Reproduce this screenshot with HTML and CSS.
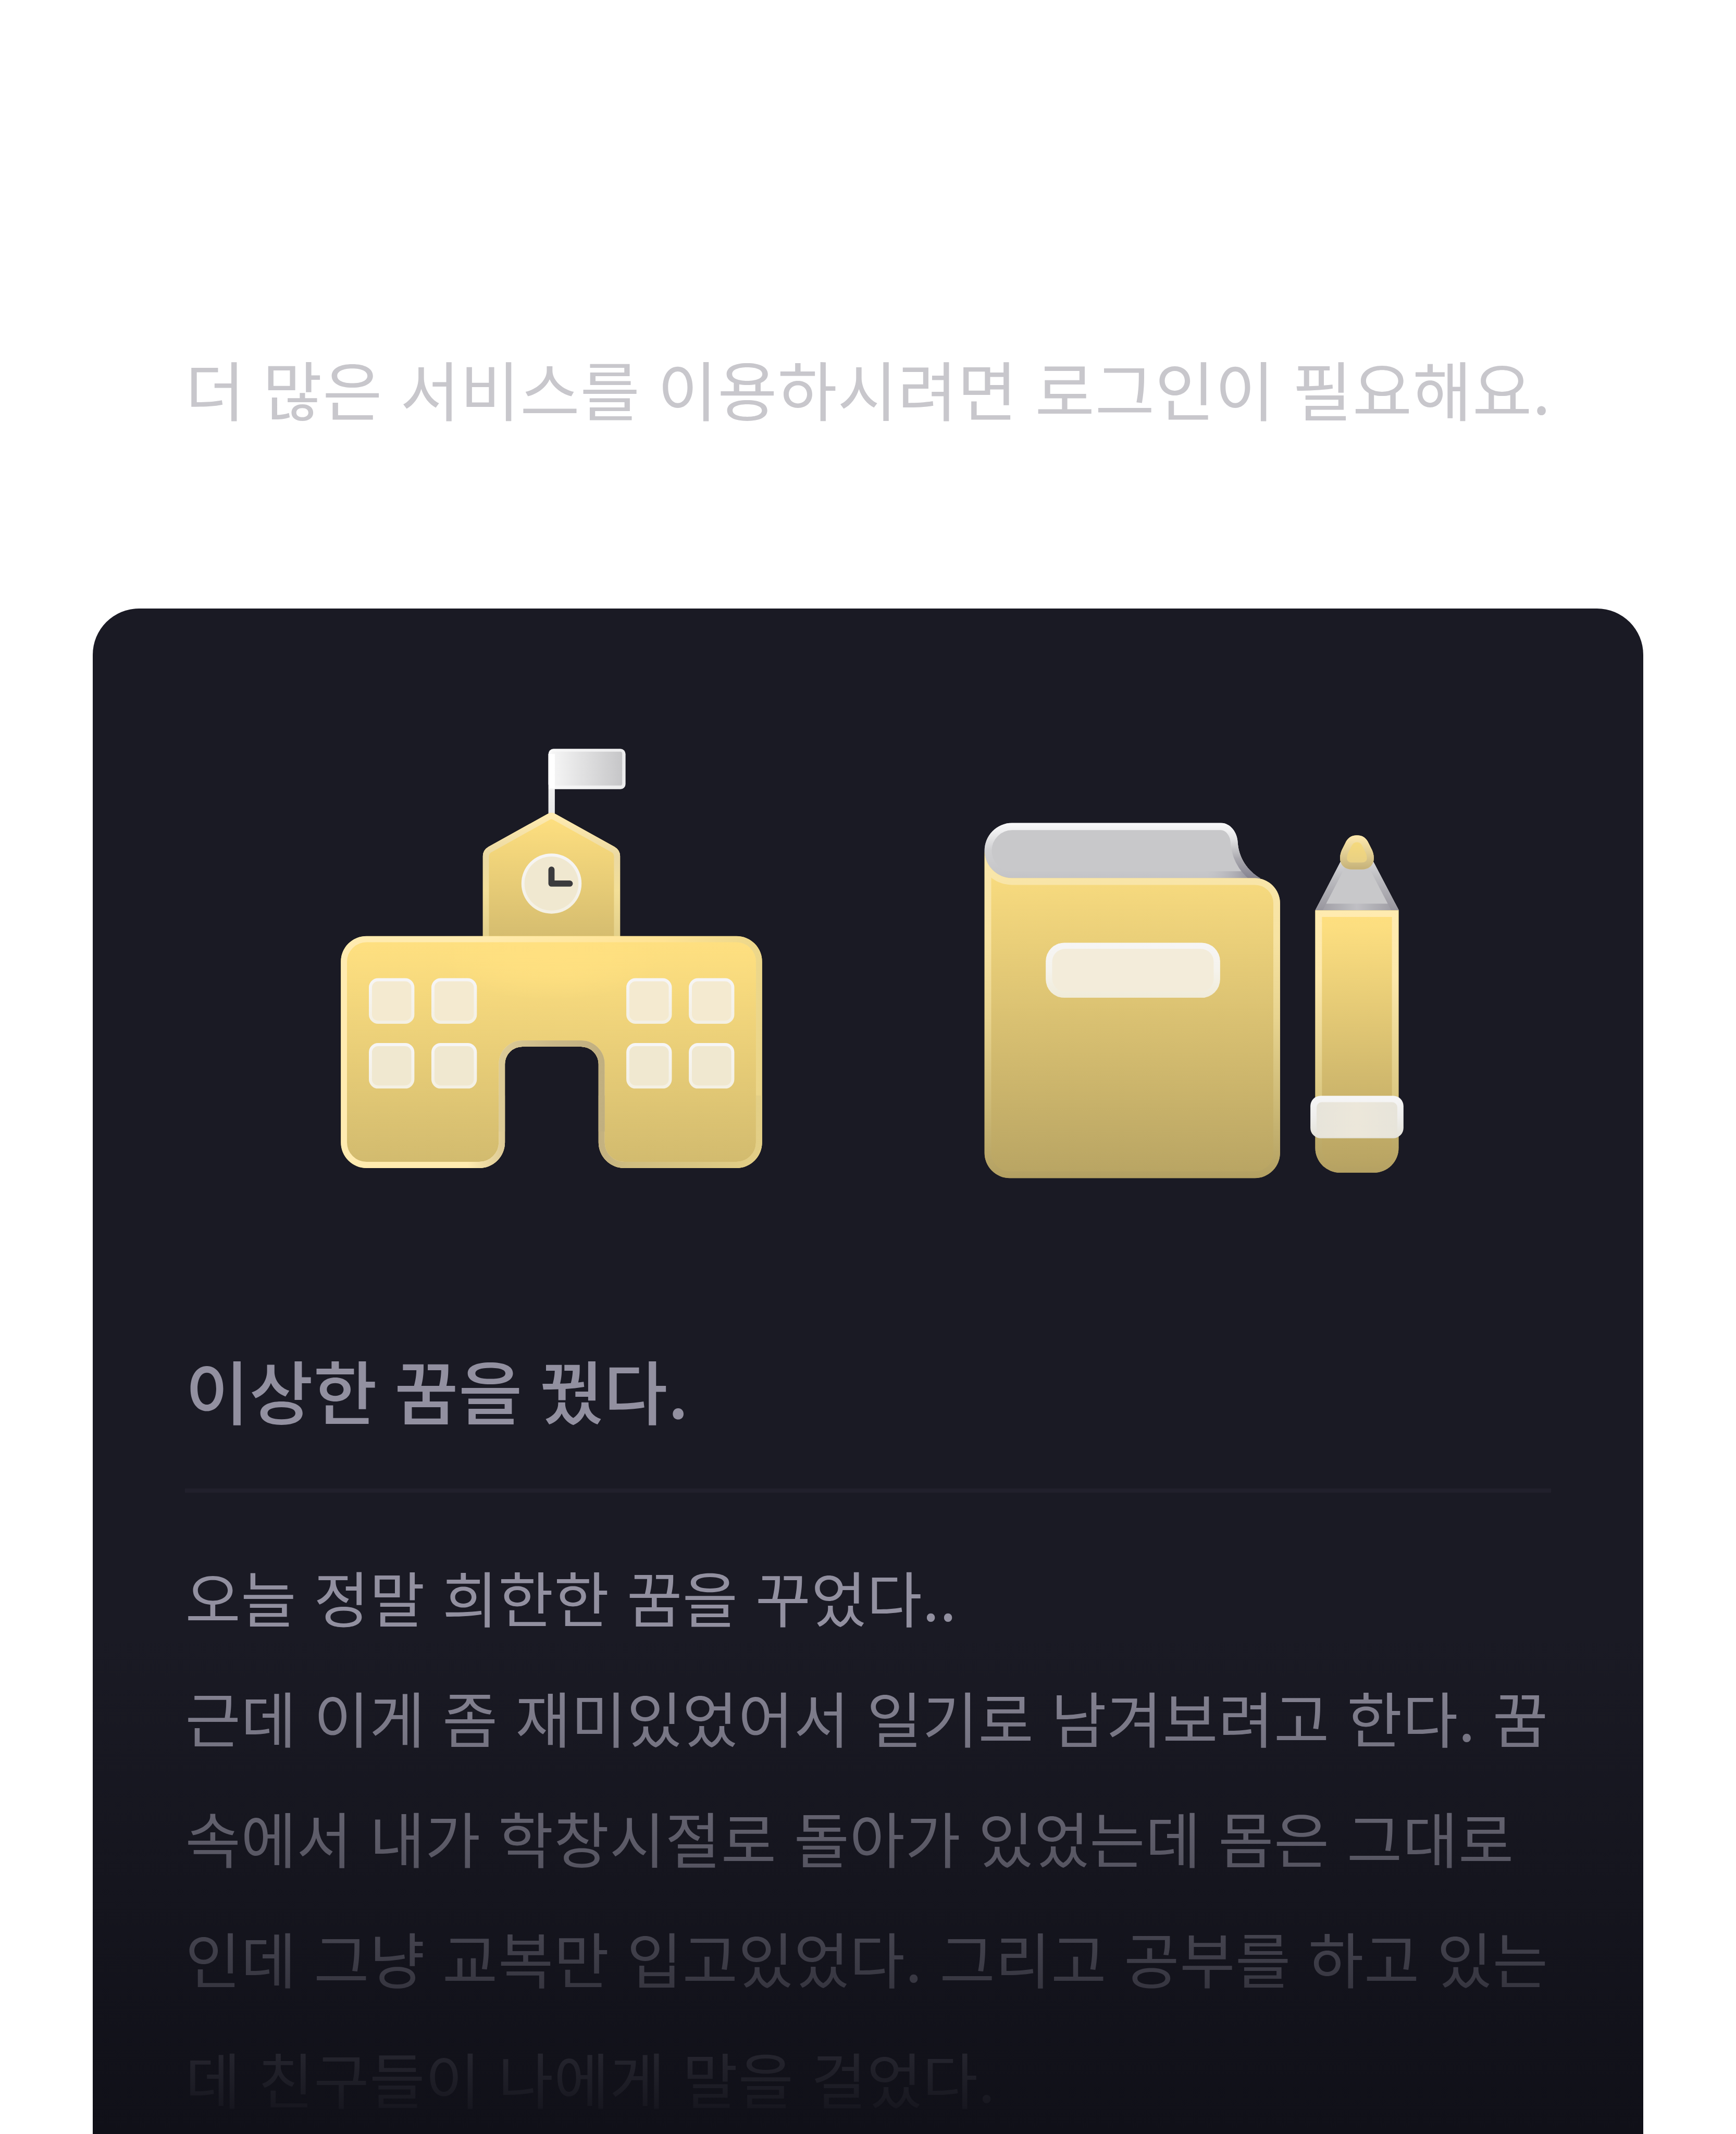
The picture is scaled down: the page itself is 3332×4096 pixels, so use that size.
FILE: index.html
```html
<!DOCTYPE html>
<html lang="ko">
<head>
<meta charset="utf-8">
<title>꿈 일기</title>
<link rel="stylesheet" href="styles.css">
</head>
<body>
<main class="screen">
  <p class="notice">더 많은 서비스를 이용하시려면 로그인이 필요해요.</p>
  <article class="card">
    <div class="icons">
      <svg class="icon" viewBox="600 1400 950 950" aria-hidden="true">
        <defs>
          <linearGradient id="flag" x1="0" x2="1" y1="0" y2="0"><stop offset="0" stop-color="#f6f6f6"/><stop offset="1" stop-color="#c6c6c8"/></linearGradient>
          <linearGradient id="flagEdge" x1="0" x2="1" y1="0" y2="0"><stop offset="0" stop-color="#f8f8f8"/><stop offset="1" stop-color="#ececed"/></linearGradient>
          <linearGradient id="pole" x1="0" x2="0" y1="0" y2="1"><stop offset="0" stop-color="#fff"/><stop offset=".53" stop-color="#fff"/><stop offset=".55" stop-color="#f0f0f0"/><stop offset="1" stop-color="#e6e6e6"/></linearGradient>
          <linearGradient id="tower" x1="0" x2="0" y1="0" y2="1"><stop offset="0" stop-color="#ffe080"/><stop offset="1" stop-color="#d2ba6e"/></linearGradient>
          <linearGradient id="towerEdge" x1="0" x2="0" y1="0" y2="1"><stop offset="0" stop-color="#ffebb0"/><stop offset=".33" stop-color="#ebd9a2"/><stop offset=".58" stop-color="#f3df98"/><stop offset="1" stop-color="#dfcc86"/></linearGradient>
          <linearGradient id="school" x1="0" x2="0" y1="0" y2="1"><stop offset="0" stop-color="#ffe080"/><stop offset=".12" stop-color="#fbdd7f"/><stop offset="1" stop-color="#d1ba6e"/></linearGradient>
          <radialGradient id="schoolGlow" gradientUnits="userSpaceOnUse" cx="0" cy="0" r="1" gradientTransform="translate(1072 1850) scale(230 95)"><stop offset="0" stop-color="#ffe080"/><stop offset=".4" stop-color="#ffe080" stop-opacity=".8"/><stop offset="1" stop-color="#ffe080" stop-opacity="0"/></radialGradient>
          <linearGradient id="schoolEdge" gradientUnits="userSpaceOnUse" x1="663" y1="2000" x2="1482" y2="2040"><stop offset="0" stop-color="#ffebb0"/><stop offset=".3" stop-color="#ffebae"/><stop offset=".75" stop-color="#ffe394"/><stop offset=".96" stop-color="#eed88b"/><stop offset="1" stop-color="#ead589"/></linearGradient>
          <linearGradient id="schoolBase" gradientUnits="userSpaceOnUse" x1="663" y1="0" x2="1482" y2="0"><stop offset=".3" stop-color="#ffebb0"/><stop offset=".39" stop-color="#dbc995"/><stop offset=".6" stop-color="#c0ae80"/><stop offset=".68" stop-color="#cfbd80"/><stop offset="1" stop-color="#e3cf86"/></linearGradient>
          <linearGradient id="door" gradientUnits="userSpaceOnUse" x1="975" y1="0" x2="1175" y2="0"><stop offset="0" stop-color="#dccb97"/><stop offset=".5" stop-color="#cab888"/><stop offset="1" stop-color="#c0af80"/></linearGradient>
          <linearGradient id="pane" x1="0" x2="0" y1="0" y2="1"><stop offset="0" stop-color="#f6f5f5"/><stop offset="1" stop-color="#f4f0e3"/></linearGradient>
          <path id="schoolShape" d="M713 1820H1432A50 50 0 0 1 1482 1870V2221A50 50 0 0 1 1432 2271H1214A50 50 0 0 1 1164 2221V2069A34 34 0 0 0 1130 2035H1016A34 34 0 0 0 982 2069V2221A50 50 0 0 1 932 2271H713A50 50 0 0 1 663 2221V1870A50 50 0 0 1 713 1820Z"/>
          <path id="towerShape" d="M939 1840V1665Q939 1653 950 1646.500L1064 1583Q1072.500 1578 1081 1583L1195 1646.500Q1206 1653 1206 1665V1840Z"/>
          <clipPath id="schoolClip"><use href="#schoolShape"/></clipPath>
          <clipPath id="towerClip"><use href="#towerShape"/></clipPath>
        </defs>
        <rect x="1066.500" y="1456" width="150" height="78.500" rx="10" fill="url(#flagEdge)"/>
        <rect x="1072" y="1461.500" width="138" height="66" rx="4" fill="url(#flag)"/>
        <rect x="1066.500" y="1466" width="12.500" height="125" fill="url(#pole)"/>
        <use href="#towerShape" fill="url(#tower)"/>
        <use href="#towerShape" clip-path="url(#towerClip)" fill="none" stroke="url(#towerEdge)" stroke-width="24"/>
        <circle cx="1072.500" cy="1718" r="58.500" fill="url(#pane)"/>
        <circle cx="1072.500" cy="1718" r="52.500" fill="#f0e8d0"/>
        <path d="M1072.500 1691V1718H1108" fill="none" stroke="#3b3b3d" stroke-width="12" stroke-linecap="round" stroke-linejoin="round"/>
        <use href="#schoolShape" fill="url(#school)"/>
        <use href="#schoolShape" fill="url(#schoolGlow)"/>
        <g clip-path="url(#schoolClip)" fill="none" stroke-width="24">
          <use href="#schoolShape" stroke="url(#schoolEdge)"/>
          <path d="M1482 2130V2221A50 50 0 0 1 1432 2271H1214A50 50 0 0 1 1164 2221V2130M982 2130V2221A50 50 0 0 1 932 2271H760" stroke="url(#schoolBase)"/>
          <path d="M1164 2200V2069A34 34 0 0 0 1130 2035H1016A34 34 0 0 0 982 2069V2200" stroke="url(#door)"/>
        </g>
        <g fill="#f4ead0" stroke="url(#pane)" stroke-width="6">
          <rect x="720.500" y="1905" width="82.500" height="82.500" rx="15"/><rect x="842" y="1905" width="82.500" height="82.500" rx="15"/>
          <rect x="1221" y="1905" width="82.500" height="82.500" rx="15"/><rect x="1342.500" y="1905" width="82.500" height="82.500" rx="15"/>
        </g>
        <g fill="#f0e8d0" stroke="url(#pane)" stroke-width="6">
          <rect x="720.500" y="2031" width="82.500" height="82.500" rx="15"/><rect x="842" y="2031" width="82.500" height="82.500" rx="15"/>
          <rect x="1221" y="2031" width="82.500" height="82.500" rx="15"/><rect x="1342.500" y="2031" width="82.500" height="82.500" rx="15"/>
        </g>
      </svg>
      <svg class="icon" viewBox="1850 1400 950 950" aria-hidden="true">
        <defs>
          <linearGradient id="cover" gradientUnits="userSpaceOnUse" x1="0" y1="1700" x2="0" y2="2290"><stop offset="0" stop-color="#f8db7f"/><stop offset="1" stop-color="#b8a463"/></linearGradient>
          <linearGradient id="coverEdge" gradientUnits="userSpaceOnUse" x1="0" y1="1665" x2="0" y2="2290"><stop offset="0" stop-color="#f9e6ab"/><stop offset=".25" stop-color="#f7e3a2"/><stop offset=".5" stop-color="#e8d48f"/><stop offset=".8" stop-color="#cab774"/><stop offset="1" stop-color="#b3a062"/></linearGradient>
          <linearGradient id="pageEdge" gradientUnits="userSpaceOnUse" x1="0" y1="1600" x2="0" y2="1707"><stop offset="0" stop-color="#f9f9fa"/><stop offset=".15" stop-color="#f0f0f1"/><stop offset=".5" stop-color="#cfcfd1"/><stop offset="1" stop-color="#c4c4c7"/></linearGradient>
          <linearGradient id="pageFoot" gradientUnits="userSpaceOnUse" x1="2340" y1="0" x2="2440" y2="0"><stop offset="0" stop-color="#c4c4c7" stop-opacity="0"/><stop offset="1" stop-color="#898792"/></linearGradient>
          <linearGradient id="pageCurl" gradientUnits="userSpaceOnUse" x1="0" y1="1630" x2="0" y2="1707"><stop offset="0" stop-color="#d0d0d2" stop-opacity="0"/><stop offset=".5" stop-color="#aaa9af"/><stop offset="1" stop-color="#858390"/></linearGradient>
          <linearGradient id="labelEdge" x1="0" x2="0" y1="0" y2="1"><stop offset="0" stop-color="#f6f5f5"/><stop offset=".5" stop-color="#f5f3ec"/><stop offset="1" stop-color="#f0ebd8"/></linearGradient>
          <linearGradient id="body" x1="0" x2="0" y1="0" y2="1"><stop offset="0" stop-color="#ffe080"/><stop offset=".08" stop-color="#fbdd7f"/><stop offset="1" stop-color="#b6a262"/></linearGradient>
          <linearGradient id="bodyEdge" x1="0" x2="0" y1="0" y2="1"><stop offset="0" stop-color="#ffebb0"/><stop offset=".25" stop-color="#fce8ab"/><stop offset=".7" stop-color="#dcc983"/><stop offset=".85" stop-color="#c1ae6b"/><stop offset="1" stop-color="#b5a162"/></linearGradient>
          <linearGradient id="cone" gradientUnits="userSpaceOnUse" x1="0" y1="1672" x2="0" y2="1770"><stop offset="0" stop-color="#d8d8da"/><stop offset=".35" stop-color="#bdbdc1"/><stop offset="1" stop-color="#98969e"/></linearGradient>
          <linearGradient id="coneFoot" gradientUnits="userSpaceOnUse" x1="2557" y1="0" x2="2720" y2="0"><stop offset="0" stop-color="#9a98a0"/><stop offset=".5" stop-color="#c0c0c4"/><stop offset="1" stop-color="#9a98a0"/></linearGradient>
          <linearGradient id="tip" x1="0" x2="0" y1="0" y2="1"><stop offset=".2" stop-color="#f5d97d"/><stop offset=".8" stop-color="#e8d084"/></linearGradient>
          <linearGradient id="tipEdge" x1="0" x2="0" y1="0" y2="1"><stop offset="0" stop-color="#ffe9ae"/><stop offset=".5" stop-color="#e2cf95"/><stop offset="1" stop-color="#c5b178"/></linearGradient>
          <linearGradient id="bandEdge" x1="0" x2="0" y1="0" y2="1"><stop offset="0" stop-color="#f6f6f6"/><stop offset=".5" stop-color="#efeeec"/><stop offset="1" stop-color="#e4e2d8"/></linearGradient>
          <linearGradient id="band" x1="0" x2="1" y1="0" y2="0"><stop offset="0" stop-color="#e7e4da"/><stop offset=".5" stop-color="#ece7da"/><stop offset="1" stop-color="#e7e4da"/></linearGradient>
          <path id="pageShape" d="M1968 1600H2374C2392 1600 2407 1618 2407 1641C2410 1670 2426 1693 2451 1708H1968A54 54 0 0 1 1914.500 1654A54 54 0 0 1 1968 1600Z"/>
          <path id="coverShape" d="M1914.500 1654A54 54 0 0 0 1968 1707.500H2440A49 49 0 0 1 2489 1756.500V2241A49 49 0 0 1 2440 2290.500H1963.500A49 49 0 0 1 1914.500 2241Z"/>
          <path id="coneShape" d="M2557.500 1770L2612 1665H2665L2720 1770Z"/>
          <path id="tipShape" d="M2638.500 1624C2650 1624 2657 1630 2661 1639L2668 1653C2671 1660 2672 1667 2671 1673C2669 1684 2660 1690.500 2648 1690.500H2629C2617 1690.500 2608 1684 2606 1673C2605 1667 2606 1660 2609 1653L2616 1639C2620 1630 2627 1624 2638.500 1624Z"/>
          <path id="bodyShape" d="M2557.500 1770H2719.500V2232A48 48 0 0 1 2671.500 2280H2605.500A48 48 0 0 1 2557.500 2232Z"/>
          <clipPath id="pageClip"><use href="#pageShape"/></clipPath>
          <clipPath id="coverClip"><use href="#coverShape"/></clipPath>
          <clipPath id="coneClip"><use href="#coneShape"/></clipPath>
          <clipPath id="tipClip"><use href="#tipShape"/></clipPath>
          <clipPath id="bodyClip"><use href="#bodyShape"/></clipPath>
        </defs>
        <use href="#pageShape" fill="#c8c8ca"/>
        <g clip-path="url(#pageClip)" fill="none" stroke-width="28">
          <use href="#pageShape" stroke="url(#pageEdge)"/>
          <path d="M2330 1708H2451" stroke="url(#pageFoot)"/>
          <path d="M2407 1630V1641C2410 1670 2426 1693 2451 1708" stroke="url(#pageCurl)"/>
        </g>
        <use href="#coverShape" fill="url(#cover)"/>
        <use href="#coverShape" clip-path="url(#coverClip)" fill="none" stroke="url(#coverEdge)" stroke-width="26"/>
        <rect x="2033.500" y="1833" width="339" height="107" rx="36" fill="url(#labelEdge)"/>
        <rect x="2046" y="1845" width="314" height="83" rx="25" fill="#f3ecda"/>
        <use href="#coneShape" fill="#c8c8ca"/>
        <g clip-path="url(#coneClip)" fill="none" stroke-width="26">
          <path d="M2557.500 1770H2720" stroke="url(#coneFoot)"/>
          <path d="M2552 1780L2612 1665M2725 1780L2665 1665" stroke="url(#cone)"/>
        </g>
        <use href="#tipShape" fill="url(#tip)"/>
        <use href="#tipShape" clip-path="url(#tipClip)" fill="none" stroke="url(#tipEdge)" stroke-width="27"/>
        <use href="#bodyShape" fill="url(#body)"/>
        <use href="#bodyShape" clip-path="url(#bodyClip)" fill="none" stroke="url(#bodyEdge)" stroke-width="26"/>
        <rect x="2548" y="2130.500" width="181" height="82.500" rx="20" fill="url(#bandEdge)"/>
        <rect x="2560" y="2143" width="157" height="68" rx="10" fill="url(#band)"/>
      </svg>
    </div>
    <h1 class="title">이상한 꿈을 꿨다.</h1>
    <p class="story">오늘 정말 희한한 꿈을 꾸었다..<br>근데 이게 좀 재미있었어서 일기로 남겨보려고 한다. 꿈<br>속에서 내가 학창시절로 돌아가 있었는데 몸은 그대로<br>인데 그냥 교복만 입고있었다. 그리고 공부를 하고 있는<br>데 친구들이 나에게 말을 걸었다.</p>
    <div class="fade"></div>
  </article>
</main>
</body>
</html>
```
FILE: styles.css
```css
/* 1rem is one unit of a 375-unit-wide screen */
html {
  font-size: calc(100vw / 375);
}

body {
  margin: 0;
  background: #fff;
  font-family: "Noto Sans CJK KR", sans-serif;
}

.screen {
  display: flex;
  flex-direction: column;
  height: 100vh;
  overflow: hidden;
}

.notice {
  margin: 0;
  padding-top: 73.8rem;
  height: 57.7rem;
  font-size: 14rem;
  line-height: 20rem;
  letter-spacing: 0.08rem;
  word-spacing: -0.22rem;
  text-align: center;
  white-space: nowrap;
  color: #c8c7cc;
}

.card {
  position: relative;
  flex: 1;
  margin: 0 20rem;
  padding: 0 20rem;
  border-radius: 10rem 10rem 0 0;
  background: #1a1a24;
  overflow: hidden;
}

.icons {
  display: flex;
  justify-content: flex-start;
  gap: 33.333rem;
  padding: 24.056rem 0 0 26.667rem;
}

.icon {
  flex: none;
  width: 105.556rem;
  height: 105.556rem;
}

.title {
  margin: 27.888rem 0 0;
  padding-bottom: 10.5rem;
  height: 22rem;
  border-bottom: 1rem solid #21202c;
  font-size: 15rem;
  font-weight: 500;
  line-height: 22rem;
  letter-spacing: 0.04rem;
  word-spacing: -0.55rem;
  white-space: nowrap;
  color: #9290a0;
}

.story {
  margin: 9.4rem 0 0;
  font-size: 13rem;
  line-height: 26rem;
  letter-spacing: 0.075rem;
  white-space: nowrap;
  color: #9290a0;
}

.fade {
  position: absolute;
  inset: auto 0 0;
  height: 108rem;
  background: linear-gradient(rgba(16, 16, 24, 0), rgb(16, 16, 24));
}
```
